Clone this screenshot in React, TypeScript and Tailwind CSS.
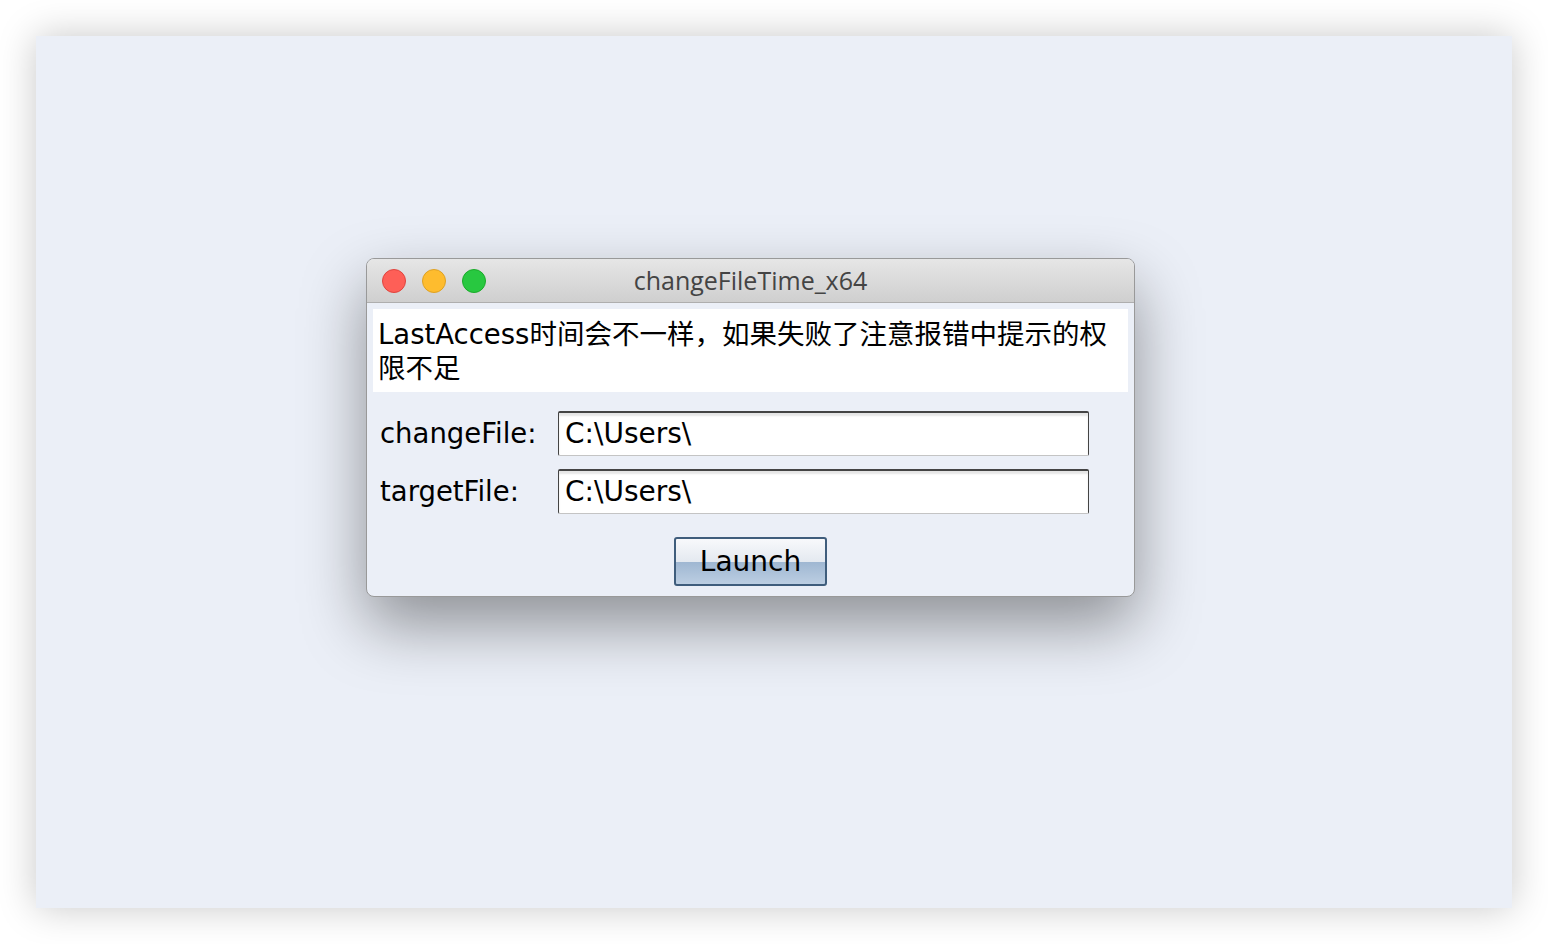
import React from "react";

const ui = { fontFamily: '"DejaVu Sans", "Noto Sans CJK SC", sans-serif' };

function TrafficLights() {
  return (
    <div className="flex items-center gap-[16px] pl-[15px]">
      <span className="h-[24px] w-[24px] rounded-full border border-[#e0443e] bg-[#fe5f57]" />
      <span className="h-[24px] w-[24px] rounded-full border border-[#dea123] bg-[#febc2e]" />
      <span className="h-[24px] w-[24px] rounded-full border border-[#1aab29] bg-[#28c840]" />
    </div>
  );
}

function PathField({ value }: { value: string }) {
  return (
    <div className="flex h-[45px] w-[531px] items-center rounded-[2px] border border-t-[2px] border-[#444] border-b-[#c4c4c4] bg-white pl-[6px] shadow-[inset_0_3px_2px_rgba(0,0,0,0.1)]">
      <span className="text-[28px] leading-none text-black">{value}</span>
    </div>
  );
}

export default function App() {
  return (
    <div className="flex min-h-[944px] w-[1548px] bg-white p-[36px]" style={ui}>
      <div className="flex flex-1 items-start bg-[#ebeff7] pl-[330px] pt-[222px] shadow-[0_0_36px_rgba(0,0,0,0.22)]">
        <div className="flex w-[769px] flex-col overflow-hidden rounded-[8px] border border-[#999] bg-[#ebeff7] shadow-[0_28px_64px_rgba(0,0,0,0.4)]">
          {/* title bar */}
          <div className="relative flex h-[44px] items-center border-b border-[#aeaeae] bg-gradient-to-b from-[#e6e6e6] to-[#cfcfcf]">
            <TrafficLights />
            <div className="absolute inset-0 flex items-center justify-center text-[25px] text-[#444]" style={{ fontFamily: '"Open Sans", "DejaVu Sans", sans-serif' }}>
              changeFileTime_x64
            </div>
          </div>

          <div className="flex flex-col px-[6px] pt-[6px]">
            <div className="flex h-[83px] flex-col justify-center bg-white pl-[5px] text-[27.5px] leading-[34px] text-black">
              <span>LastAccess时间会不一样，如果失败了注意报错中提示的权</span>
              <span>限不足</span>
            </div>
          </div>

          <div className="flex flex-col gap-[13px] pl-[13px] pt-[19px]">
            <div className="flex items-center">
              <span className="w-[178px] text-[27.5px] text-black">changeFile:</span>
              <PathField value="C:\Users\" />
            </div>
            <div className="flex items-center">
              <span className="w-[178px] text-[27.5px] text-black">targetFile:</span>
              <PathField value="C:\Users\" />
            </div>
          </div>

          <div className="flex justify-center pb-[10px] pt-[23px]">
            <button className="flex h-[49px] w-[153px] items-center justify-center rounded-[3px] border-[2px] border-[#3f5d7c] bg-[linear-gradient(to_bottom,#f8f9fb_0%,#e4e9f0_50%,#9fb7d2_52%,#bccee2_100%)] text-[28px] text-black">
              Launch
            </button>
          </div>
        </div>
      </div>
    </div>
  );
}
